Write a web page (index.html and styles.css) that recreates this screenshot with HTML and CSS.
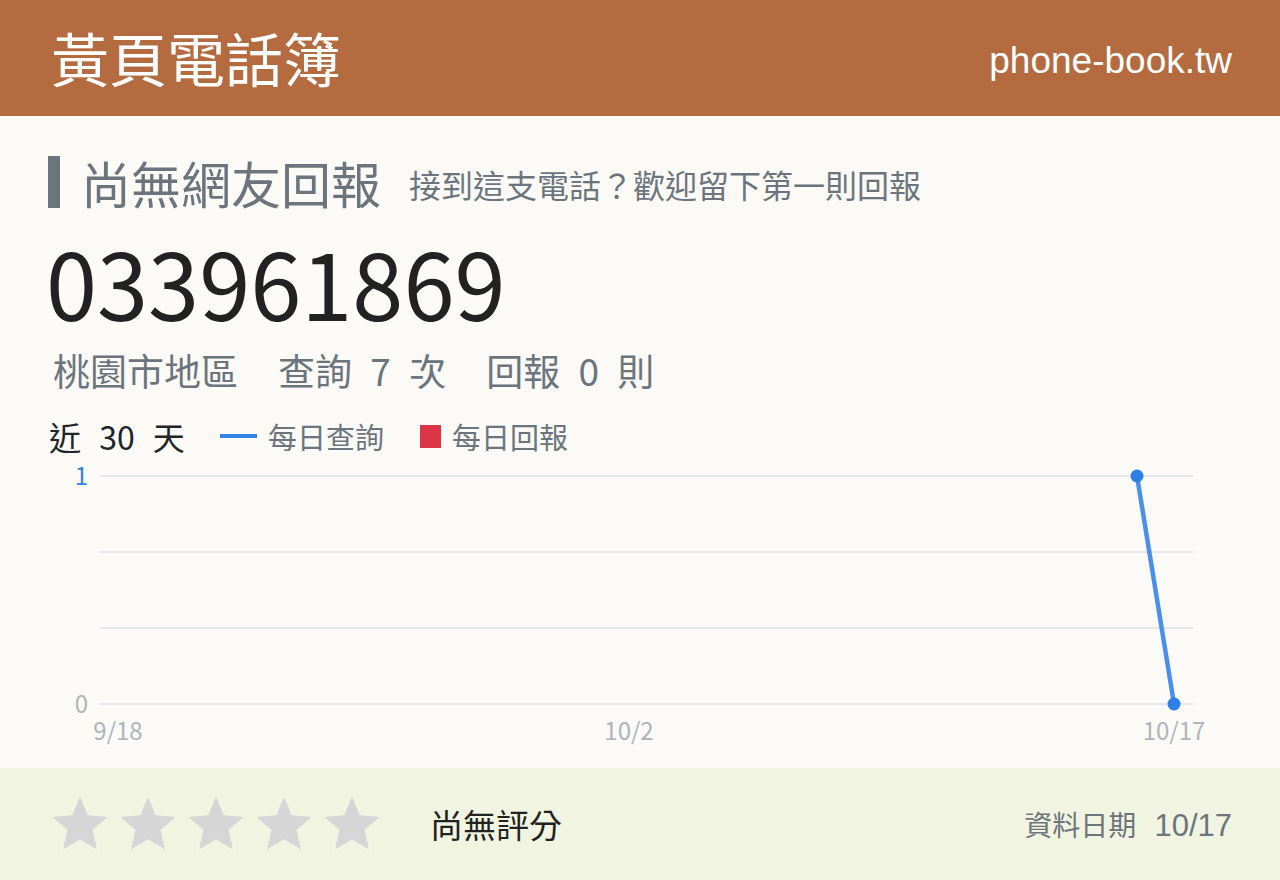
FILE: index.html
```html
<!DOCTYPE html>
<html lang="zh-Hant">
<head>
<meta charset="utf-8">
<title>033961869 - 黃頁電話簿</title>
<link rel="stylesheet" href="styles.css">
</head>
<body>
<header class="site-header">
  <div class="brand">黃頁電話簿</div>
  <div class="domain">phone-book.tw</div>
</header>

<main class="content">
  <div class="heading">
    <h1 class="heading-title">尚無網友回報</h1>
    <span class="heading-sub">接到這支電話？歡迎留下第一則回報</span>
  </div>

  <div class="number">033961869</div>

  <div class="stats">
    <span class="stat">桃園市地區</span>
    <span class="stat">查詢 <span class="num">7</span> 次</span>
    <span class="stat">回報 <span class="num">0</span> 則</span>
  </div>

  <div class="legend">
    <span class="period">近 <span class="num">30</span> 天</span>
    <span class="legend-item"><span class="swatch swatch-line"></span>每日查詢</span>
    <span class="legend-item"><span class="swatch swatch-box"></span>每日回報</span>
  </div>

  <svg class="chart" width="1184" height="308" viewBox="0 0 1184 308">
    <g class="grid">
      <line x1="52" y1="16" x2="1145" y2="16"/>
      <line x1="52" y1="92" x2="1145" y2="92"/>
      <line x1="52" y1="168" x2="1145" y2="168"/>
      <line x1="52" y1="244" x2="1145" y2="244"/>
    </g>
    <text class="y-label y-max" x="40" y="25">1</text>
    <text class="y-label" x="40" y="253">0</text>
    <text class="x-label" x="70" y="280">9/18</text>
    <text class="x-label" x="581" y="280">10/2</text>
    <text class="x-label" x="1126" y="280">10/17</text>
    <polyline class="series" points="1089,16 1126,244"/>
    <circle class="dot" cx="1089" cy="16" r="6.5"/>
    <circle class="dot" cx="1126" cy="244" r="6.5"/>
  </svg>
</main>

<footer class="rating-bar">
  <div class="stars">
    <svg class="star" viewBox="0 0 24 24"><path d="M12 1.2l3.1 7.3 7.9.7-6 5.2 1.8 7.8L12 18.1l-6.8 4.1 1.8-7.8-6-5.2 7.9-.7z"/></svg>
    <svg class="star" viewBox="0 0 24 24"><path d="M12 1.2l3.1 7.3 7.9.7-6 5.2 1.8 7.8L12 18.1l-6.8 4.1 1.8-7.8-6-5.2 7.9-.7z"/></svg>
    <svg class="star" viewBox="0 0 24 24"><path d="M12 1.2l3.1 7.3 7.9.7-6 5.2 1.8 7.8L12 18.1l-6.8 4.1 1.8-7.8-6-5.2 7.9-.7z"/></svg>
    <svg class="star" viewBox="0 0 24 24"><path d="M12 1.2l3.1 7.3 7.9.7-6 5.2 1.8 7.8L12 18.1l-6.8 4.1 1.8-7.8-6-5.2 7.9-.7z"/></svg>
    <svg class="star" viewBox="0 0 24 24"><path d="M12 1.2l3.1 7.3 7.9.7-6 5.2 1.8 7.8L12 18.1l-6.8 4.1 1.8-7.8-6-5.2 7.9-.7z"/></svg>
  </div>
  <span class="rating-text">尚無評分</span>
  <span class="updated">資料日期 <span class="updated-date">10/17</span></span>
</footer>
</body>
</html>
```

FILE: styles.css
```css
* {
  box-sizing: border-box;
}

html,
body {
  margin: 0;
  padding: 0;
}

body {
  width: 1280px;
  height: 880px;
  overflow: hidden;
  background: #fbfaf6;
  color: #212529;
  font-family: "Noto Sans CJK TC", "Noto Sans", sans-serif;
}

/* top bar */
.site-header {
  height: 116px;
  padding: 0 48px 0 51px;
  display: flex;
  align-items: center;
  justify-content: space-between;
  background: #b56b40;
  color: #ffffff;
}

.brand {
  font-size: 58px;
  line-height: 1;
  padding-bottom: 2px;
}

.domain {
  font-family: "Liberation Sans", Arial, sans-serif;
  font-size: 37px;
  line-height: 1;
  padding-top: 5px;
}

/* main block */
.content {
  padding: 40px 48px 0;
  height: 652px;
}

.heading {
  display: flex;
  align-items: center;
  color: #6c757d;
}

.heading-title {
  margin: 0;
  border-left: 12px solid #6c757d;
  padding-left: 21px;
  font-size: 50px;
  font-weight: 400;
  line-height: 52px;
}

.heading-sub {
  margin-left: 28px;
  font-size: 32px;
  line-height: 1;
  padding-top: 4px;
}

.number {
  margin-top: 27px;
  font-size: 92px;
  line-height: 1;
  color: #222222;
  margin-left: -2px;
}

.stats {
  margin-top: 25px;
  display: flex;
  gap: 40px;
  font-size: 37px;
  line-height: 1;
  color: #6c757d;
  padding-left: 5px;
}

.stat .num {
  margin: 0 10px;
}

.legend {
  margin-top: 32px;
  display: flex;
  align-items: center;
  font-size: 29px;
  line-height: 30px;
  color: #6c757d;
  padding-left: 1px;
}

.period {
  font-size: 32px;
  line-height: 30px;
  color: #212529;
  margin-right: 35px;
}

.period .num {
  margin: 0 11px;
}

.legend-item {
  display: flex;
  align-items: center;
  margin-right: 36px;
}

.swatch {
  display: inline-block;
  margin-right: 11px;
}

.swatch-line {
  width: 37px;
  height: 4px;
  background: #3282e8;
}

.swatch-box {
  width: 21px;
  height: 23px;
  background: #dc3545;
}

/* daily chart */
.chart {
  display: block;
  margin-top: 9px;
  overflow: visible;
}

.grid line {
  stroke: #e6e8ec;
  stroke-width: 2;
}

.y-label,
.x-label {
  font-family: "Noto Sans CJK TC", "Noto Sans", sans-serif;
  font-size: 24px;
  fill: #adb5bd;
}

.y-label {
  text-anchor: end;
}

.y-label.y-max {
  fill: #3282e8;
}

.x-label {
  text-anchor: middle;
}

.series {
  fill: none;
  stroke: #4a8fec;
  stroke-width: 4.5;
}

.dot {
  fill: #2e7fe8;
}

/* rating bar */
.rating-bar {
  height: 112px;
  padding: 0 48px 0 50px;
  display: flex;
  align-items: center;
  background: #f1f4e1;
}

.stars {
  display: flex;
  gap: 8px;
}

.star {
  width: 60px;
  height: 60px;
  display: block;
}

.star path {
  fill: #d6d6d6;
}

.rating-text {
  margin-left: 48px;
  font-size: 33px;
  color: #222222;
}

.updated {
  margin-left: auto;
  font-size: 28px;
  color: #6c757d;
}

.updated-date {
  margin-left: 12px;
  font-family: "Liberation Sans", Arial, sans-serif;
  font-size: 31px;
}
```
